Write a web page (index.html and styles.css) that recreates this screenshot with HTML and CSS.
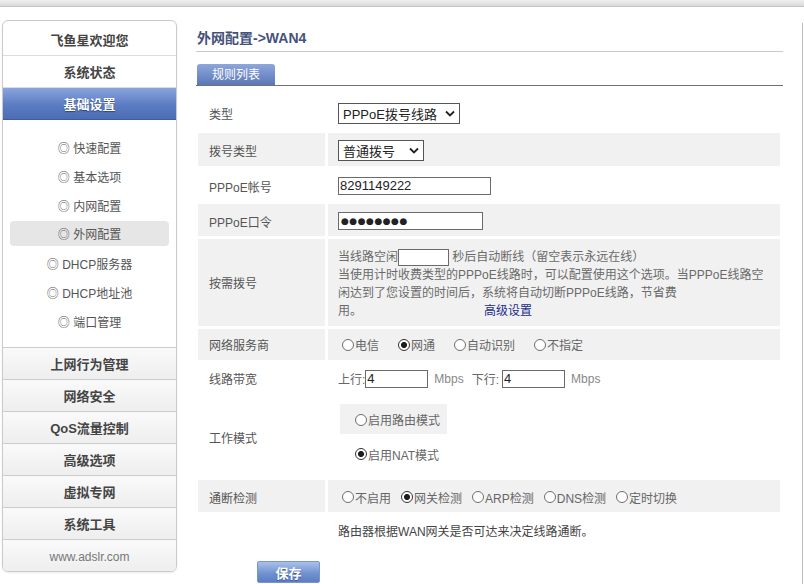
FILE: index.html
```html
<!DOCTYPE html>
<html lang="zh-CN">
<head>
    <meta charset="UTF-8">
    <title>外网配置</title>
    <link rel="stylesheet" href="styles.css">
</head>
<body>
<div class="topbar"></div>
<div class="page">
    <div class="sidebar">
        <div class="sb-head">飞鱼星欢迎您</div>
        <div class="sb-item">系统状态</div>
        <div class="sb-item active">基础设置</div>
        <div class="sb-sub">
            <div class="sub">◎ 快速配置</div>
            <div class="sub">◎ 基本选项</div>
            <div class="sub">◎ 内网配置</div>
            <div class="sub current">◎ 外网配置</div>
            <div class="sub">◎ DHCP服务器</div>
            <div class="sub">◎ DHCP地址池</div>
            <div class="sub">◎ 端口管理</div>
        </div>
        <div class="sb-group">上网行为管理</div>
        <div class="sb-group">网络安全</div>
        <div class="sb-group">QoS流量控制</div>
        <div class="sb-group">高级选项</div>
        <div class="sb-group">虚拟专网</div>
        <div class="sb-group">系统工具</div>
        <div class="sb-group foot">www.adslr.com</div>
    </div>

    <div class="main">
        <div class="title">外网配置-&gt;WAN4</div>
        <div class="tabs"><span class="tab">规则列表</span></div>

        <div class="form">
            <div class="row r-type">
                <div class="lbl">类型</div>
                <div class="val">
                    <span class="select s-type">PPPoE拨号线路<svg class="chev" viewBox="0 0 10 7"><path d="M1 1.5l4 4 4-4" /></svg></span>
                </div>
            </div>
            <div class="row g r-dial">
                <div class="lbl">拨号类型</div>
                <div class="val">
                    <span class="select s-dial">普通拨号<svg class="chev" viewBox="0 0 10 7"><path d="M1 1.5l4 4 4-4" /></svg></span>
                </div>
            </div>
            <div class="row r-acct">
                <div class="lbl">PPPoE帐号</div>
                <div class="val"><span class="field f-acct">8291149222</span></div>
            </div>
            <div class="row g r-pass">
                <div class="lbl">PPPoE口令</div>
                <div class="val"><span class="field f-pass">●●●●●●●●</span></div>
            </div>
            <div class="row g r-demand">
                <div class="lbl">按需拨号</div>
                <div class="val text">
                    当线路空闲<span class="field f-idle"></span> 秒后自动断线（留空表示永远在线）<br>
                    当使用计时收费类型的PPPoE线路时，可以配置使用这个选项。当PPPoE线路空<br>
                    闲达到了您设置的时间后，系统将自动切断PPPoE线路，节省费<br>
                    用。<a class="adv" href="#">高级设置</a>
                </div>
            </div>
            <div class="row g r-isp">
                <div class="lbl">网络服务商</div>
                <div class="val opts wide">
                    <span class="opt"><span class="rd"></span>电信</span>
                    <span class="opt"><span class="rd on"></span>网通</span>
                    <span class="opt"><span class="rd"></span>自动识别</span>
                    <span class="opt"><span class="rd"></span>不指定</span>
                </div>
            </div>
            <div class="row r-bw">
                <div class="lbl">线路带宽</div>
                <div class="val">
                    上行:<span class="field f-bw">4</span>
                    <span class="unit">Mbps</span>
                    <span class="down">下行:</span><span class="field f-bw">4</span>
                    <span class="unit">Mbps</span>
                </div>
            </div>
            <div class="row r-mode">
                <div class="lbl">工作模式</div>
                <div class="val mode">
                    <div class="mode-box"><span class="rd"></span>启用路由模式</div>
                    <div class="mode-nat"><span class="rd on"></span>启用NAT模式</div>
                </div>
            </div>
            <div class="row g r-check">
                <div class="lbl">通断检测</div>
                <div class="val opts tight">
                    <span class="opt"><span class="rd"></span>不启用</span>
                    <span class="opt"><span class="rd on"></span>网关检测</span>
                    <span class="opt"><span class="rd"></span>ARP检测</span>
                    <span class="opt"><span class="rd"></span>DNS检测</span>
                    <span class="opt"><span class="rd"></span>定时切换</span>
                </div>
            </div>
            <div class="row r-note">
                <div class="lbl"></div>
                <div class="val note">路由器根据WAN网关是否可达来决定线路通断。</div>
            </div>
        </div>

        <div class="actions"><button class="btn-save">保存</button></div>
    </div>

    <div class="edge"></div>
</div>
</body>
</html>
```

FILE: styles.css
```css
body {
    margin: 0;
    height: 584px;
    overflow: hidden;
    background: #fff;
    font-family: "Liberation Sans", "Noto Sans CJK SC", sans-serif;
    font-size: 12px;
    color: #555;
}

.topbar {
    height: 6px;
    background: linear-gradient(#f0f0f0, #d9d9d9);
    border-bottom: 1px solid #c4c4c4;
}

.page {
    display: flex;
    align-items: flex-start;
    height: 577px;
}

/* left menu */
.sidebar {
    width: 175px;
    margin: 13px 0 0 2px;
    box-sizing: border-box;
    border: 1px solid #cacaca;
    border-radius: 6px;
    overflow: hidden;
    box-shadow: 0 1px 2px rgba(0, 0, 0, 0.08);
}

.sb-head,
.sb-item,
.sb-group {
    box-sizing: content-box;
    text-align: center;
    font-size: 13px;
    font-weight: bold;
    color: #444;
}

.sb-head {
    height: 29px;
    padding-top: 5px;
    line-height: 29px;
    border-bottom: 1px solid #dcdcdc;
}

.sb-item {
    height: 28px;
    padding-top: 3px;
    line-height: 28px;
    border-bottom: 1px solid #dcdcdc;
}

.sb-item.active {
    color: #fff;
    background: linear-gradient(#8aa4dc, #5b7cc2 55%, #4c6db3);
    border-bottom-color: #3e5c9c;
    text-shadow: 0 1px 1px #2d4578;
}

.sb-sub {
    padding: 12px 0;
}

.sub {
    height: 29px;
    box-sizing: border-box;
    padding-top: 5px;
    line-height: 24px;
    text-align: center;
    color: #555;
}

.sub.current {
    height: 25px;
    padding-top: 4px;
    line-height: 21px;
    margin: 2px 7px;
    background: #e6e6e6;
    border-radius: 4px;
}

.sb-group {
    height: 28px;
    padding-top: 3px;
    line-height: 28px;
    border-top: 1px solid #cdcdcd;
    background: linear-gradient(#fafafa, #eeeeee);
}

.sb-group.foot {
    font-size: 12px;
    font-weight: normal;
    color: #777;
}

/* main area */
.main {
    width: 587px;
    margin-left: 19px;
}

.title {
    padding: 23px 0 5px 1px;
    line-height: 16px;
    font-size: 14px;
    font-weight: bold;
    color: #46527a;
    border-bottom: 1px solid #c9c9c9;
}

.tabs {
    height: 21px;
    margin-top: 12px;
    border-bottom: 1px solid #707070;
}

.tab {
    display: inline-block;
    width: 78px;
    height: 21px;
    line-height: 22px;
    margin-left: 1px;
    text-align: center;
    color: #fff;
    background: linear-gradient(#8ea7dc, #5a77b8);
    border-radius: 3px 3px 0 0;
}

.form {
    margin: 9px 3px 0 2px;
}

.row {
    display: flex;
    margin-top: 3px;
}

.lbl {
    width: 127px;
    flex-shrink: 0;
    box-sizing: border-box;
    padding: 2px 0 0 11px;
    display: flex;
    align-items: center;
    color: #555;
}

.val {
    flex: 1;
    margin-left: 3px;
    padding: 2px 0 0 10px;
    display: flex;
    align-items: center;
    color: #666;
}

.g .lbl,
.g .val {
    background: #f1f1f1;
}

.r-type { height: 35px; }
.r-dial { height: 33px; }
.r-acct { height: 32px; }
.r-pass { height: 32px; }
.r-isp { height: 31px; }
.r-bw { height: 31px; }
.r-mode { height: 80px; }
.r-check { height: 32px; }
.r-note { height: 28px; }

.r-isp .lbl,
.r-isp .val,
.r-bw .lbl,
.r-bw .val,
.r-mode .lbl {
    padding-top: 0;
}

/* fake select boxes */
.select {
    display: inline-flex;
    align-items: center;
    justify-content: space-between;
    box-sizing: border-box;
    height: 21px;
    padding: 0 4px 0 4px;
    border: 1px solid #555;
    background: #fff;
    font-size: 13px;
    color: #222;
}

.s-type { width: 122px; }
.s-dial { width: 86px; }

.chev {
    width: 10px;
    height: 7px;
    fill: none;
    stroke: #222;
    stroke-width: 1.8;
}

.field {
    display: inline-block;
    box-sizing: border-box;
    height: 18px;
    line-height: 16px;
    padding-left: 1px;
    border: 1px solid #6a6a6a;
    background: #fff;
    font-size: 13px;
    color: #222;
    vertical-align: middle;
}

.f-acct { width: 153px; }

.f-pass {
    width: 145px;
    font-family: "DejaVu Sans", sans-serif;
    font-size: 9px;
    letter-spacing: 0.5px;
    padding-left: 2px;
}

.f-idle {
    width: 51px;
    height: 17px;
}

.f-bw { width: 63px; }

.r-demand .lbl {
    padding-top: 0;
}

.r-demand .val.text {
    display: block;
    padding-top: 9px;
    padding-bottom: 6px;
    line-height: 18px;
    color: #6a6a6a;
}

.adv {
    margin-left: 122px;
    color: #1c2c8a;
    text-decoration: none;
}

/* radio groups */
.rd {
    display: inline-block;
    width: 12px;
    height: 12px;
    box-sizing: border-box;
    margin-right: 1px;
    border: 1px solid #6e6e6e;
    border-radius: 50%;
    background: #fff;
}

.rd.on {
    border-color: #333;
    background: radial-gradient(circle, #1e1e1e 0 2.7px, #fff 3.3px);
}

.opt {
    display: inline-flex;
    align-items: center;
}

.opts .opt:first-child { margin-left: 4px; }
.wide .opt { margin-right: 19px; }
.tight .opt { margin-right: 10px; }

.unit {
    margin-left: 6px;
    color: #888;
}

.down { margin-left: 8px; margin-right: 3px; }

.val.mode {
    display: block;
    padding-top: 7px;
}

.mode-box {
    display: flex;
    align-items: center;
    width: 107px;
    height: 30px;
    box-sizing: border-box;
    margin-left: 2px;
    padding: 1px 0 0 15px;
    background: #f1f1f1;
}

.mode-nat {
    display: flex;
    align-items: center;
    height: 16px;
    margin-top: 12px;
    padding-left: 17px;
}

.val.note {
    color: #444;
}

.actions {
    margin: 18px 0 0 61px;
}

.btn-save {
    width: 63px;
    height: 22px;
    padding: 0;
    border: 1px solid #7a95c9;
    border-radius: 2px;
    background: linear-gradient(#a9c0ea, #6f8fcf 60%, #5d7ec2);
    font-family: "Noto Sans CJK SC", sans-serif;
    font-size: 13px;
    font-weight: bold;
    color: #fff;
    text-shadow: 0 1px 1px #3d5a96;
    cursor: pointer;
}

.edge {
    align-self: stretch;
    width: 1px;
    margin: 16px 1px 0 auto;
    background: #bdbdbd;
}
```
